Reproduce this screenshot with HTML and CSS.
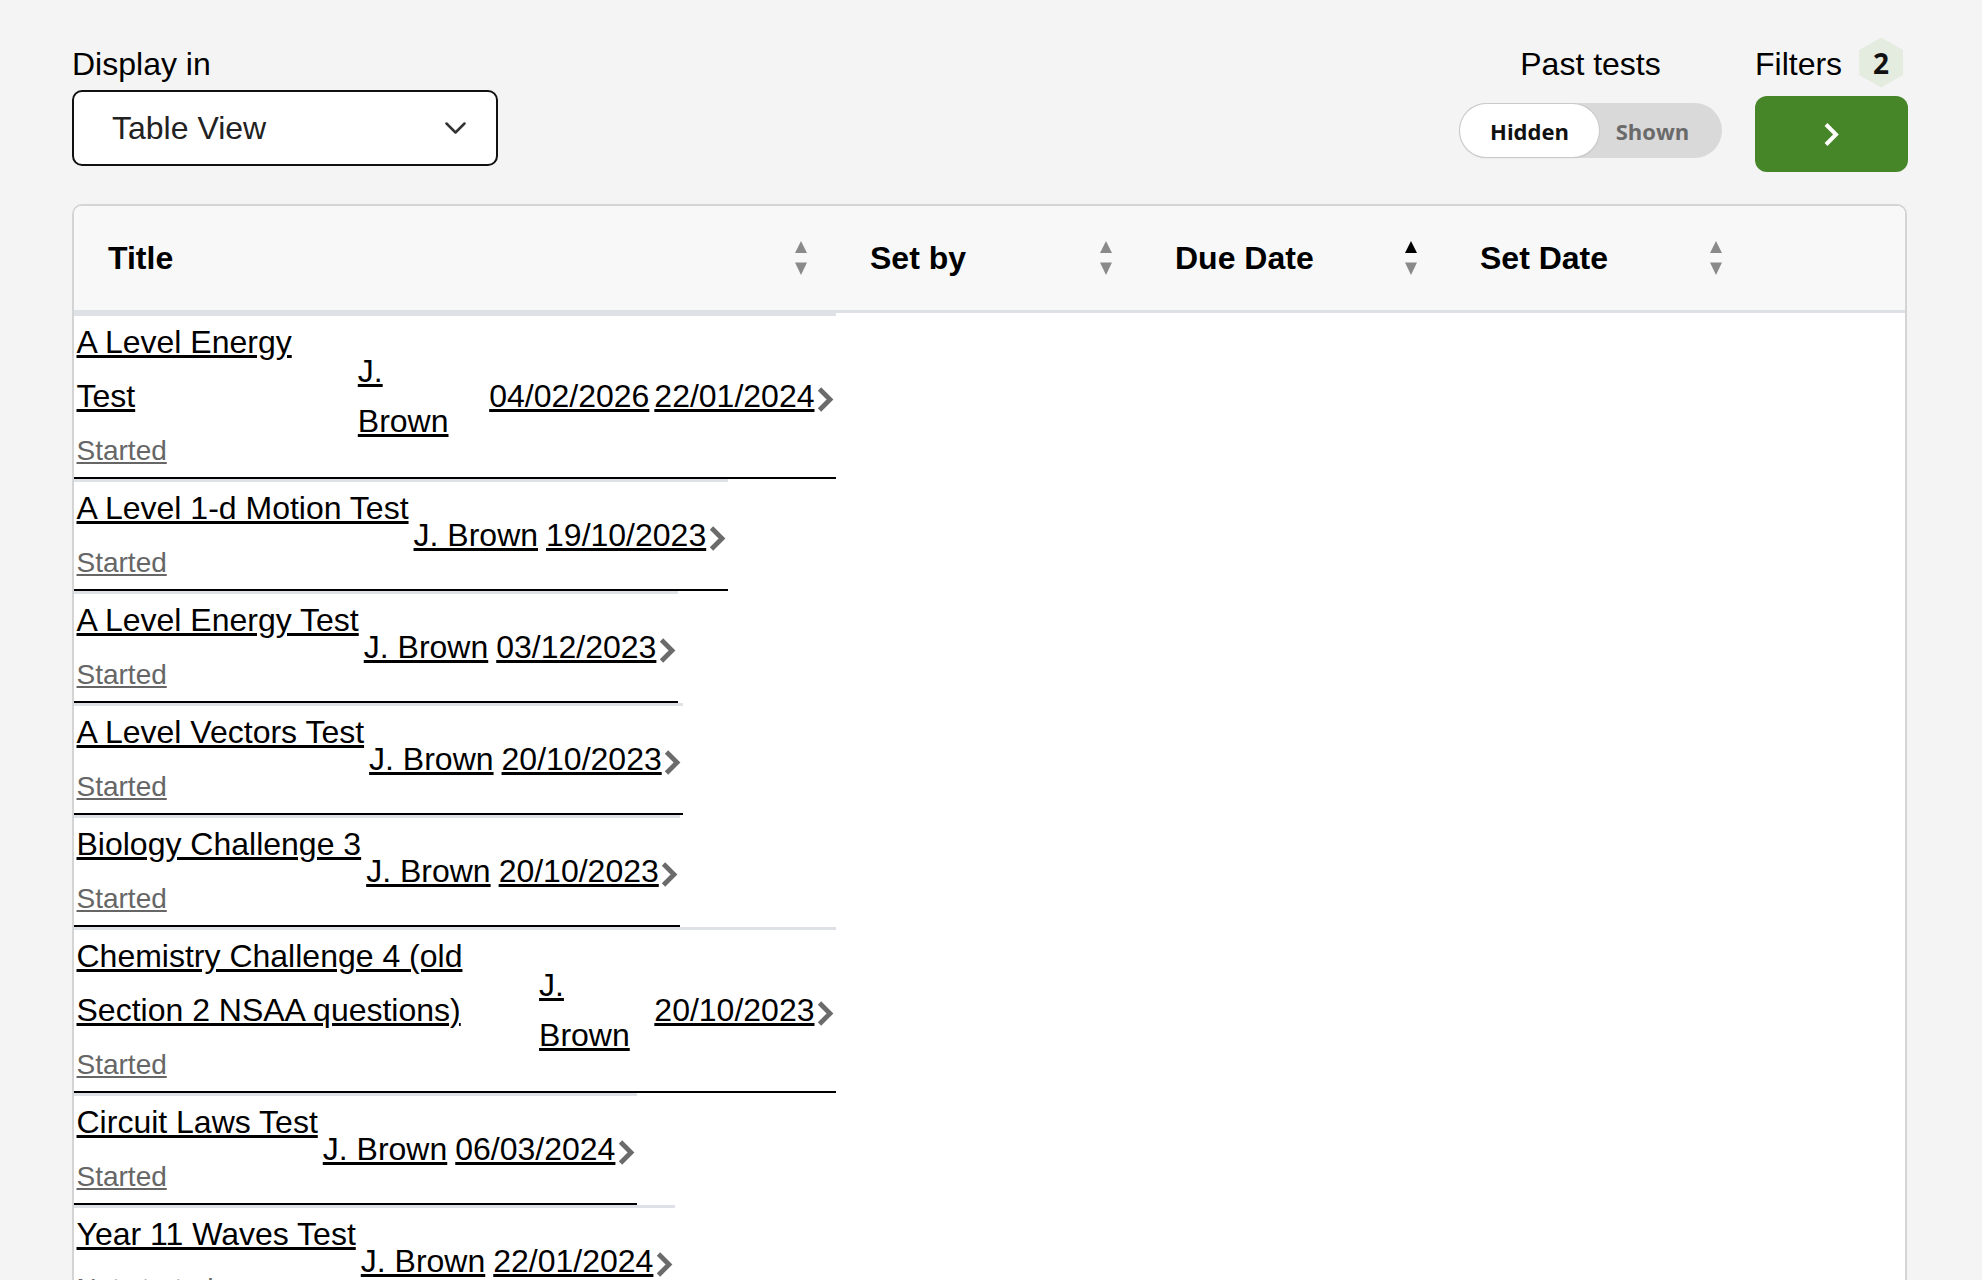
FILE: index.html
```html
<!DOCTYPE html>
<html lang="en">
<head>
<meta charset="utf-8">
<title>Tests</title>
<link rel="stylesheet" href="styles.css">
</head>
<body>
<div class="page">
  <div class="toolbar">
    <div class="display-group">
      <span class="label">Display in</span>
      <div class="select">
        <span>Table View</span>
        <svg class="select-chev" viewBox="0 0 21 12" width="21" height="12"><polyline points="1.5,1.5 10.5,10.5 19.5,1.5" fill="none" stroke="#333" stroke-width="2.5" stroke-linecap="round" stroke-linejoin="round"/></svg>
      </div>
    </div>
    <div class="right-groups">
      <div class="past-group">
        <span class="label">Past tests</span>
        <div class="toggle">
          <span class="opt on">Hidden</span>
          <span class="opt off">Shown</span>
        </div>
      </div>
      <div class="filters-group">
        <div class="filters-head">
          <span class="label">Filters</span>
          <span class="hex">2</span>
        </div>
        <button class="go" type="button">
          <svg viewBox="0 0 17 25" width="17" height="25"><polyline points="3,2.5 13,12.5 3,22.5" fill="none" stroke="#fff" stroke-width="4"/></svg>
        </button>
      </div>
    </div>
  </div>

  <div class="card">
    <div class="thead">
      <div class="th th-title"><span>Title</span><svg class="sort" viewBox="0 0 12 34"><polygon points="6,0 12,12 0,12" fill="#8a8a8a"/><polygon points="0,21.5 12,21.5 6,34" fill="#8a8a8a"/></svg></div>
      <div class="th"><span>Set by</span><svg class="sort" viewBox="0 0 12 34"><polygon points="6,0 12,12 0,12" fill="#8a8a8a"/><polygon points="0,21.5 12,21.5 6,34" fill="#8a8a8a"/></svg></div>
      <div class="th"><span>Due Date</span><svg class="sort" viewBox="0 0 12 34"><polygon points="6,0 12,12 0,12" fill="#000"/><polygon points="0,21.5 12,21.5 6,34" fill="#8a8a8a"/></svg></div>
      <div class="th"><span>Set Date</span><svg class="sort" viewBox="0 0 12 34"><polygon points="6,0 12,12 0,12" fill="#8a8a8a"/><polygon points="0,21.5 12,21.5 6,34" fill="#8a8a8a"/></svg></div>
      <div class="th th-rest"></div>
    </div>

    <div class="rows">
      <div class="row">
        <div class="c title-cell"><div><a href="#">A Level Energy Test</a></div><div class="status"><a href="#">Started</a></div></div>
        <div class="c by"><a href="#">J. Brown</a></div>
        <div class="c date"><a href="#">04/02/2026</a></div>
        <div class="c date"><a href="#">22/01/2024</a></div>
        <div class="c chev"><svg viewBox="0 0 17 27"><polyline points="2.5,3 13,13.5 2.5,24" fill="none" stroke="#6b6b6b" stroke-width="4.8"/></svg></div>
      </div>
      <div class="row">
        <div class="c title-cell"><div><a href="#">A Level 1-d Motion Test</a></div><div class="status"><a href="#">Started</a></div></div>
        <div class="c by"><a href="#">J. Brown</a></div>
        <div class="c date"><a href="#">19/10/2023</a></div>
        <div class="c chev"><svg viewBox="0 0 17 27"><polyline points="2.5,3 13,13.5 2.5,24" fill="none" stroke="#6b6b6b" stroke-width="4.8"/></svg></div>
      </div>
      <div class="row">
        <div class="c title-cell"><div><a href="#">A Level Energy Test</a></div><div class="status"><a href="#">Started</a></div></div>
        <div class="c by"><a href="#">J. Brown</a></div>
        <div class="c date"><a href="#">03/12/2023</a></div>
        <div class="c chev"><svg viewBox="0 0 17 27"><polyline points="2.5,3 13,13.5 2.5,24" fill="none" stroke="#6b6b6b" stroke-width="4.8"/></svg></div>
      </div>
      <div class="row">
        <div class="c title-cell"><div><a href="#">A Level Vectors Test</a></div><div class="status"><a href="#">Started</a></div></div>
        <div class="c by"><a href="#">J. Brown</a></div>
        <div class="c date"><a href="#">20/10/2023</a></div>
        <div class="c chev"><svg viewBox="0 0 17 27"><polyline points="2.5,3 13,13.5 2.5,24" fill="none" stroke="#6b6b6b" stroke-width="4.8"/></svg></div>
      </div>
      <div class="row">
        <div class="c title-cell"><div><a href="#">Biology Challenge 3</a></div><div class="status"><a href="#">Started</a></div></div>
        <div class="c by"><a href="#">J. Brown</a></div>
        <div class="c date"><a href="#">20/10/2023</a></div>
        <div class="c chev"><svg viewBox="0 0 17 27"><polyline points="2.5,3 13,13.5 2.5,24" fill="none" stroke="#6b6b6b" stroke-width="4.8"/></svg></div>
      </div>
      <div class="row">
        <div class="c title-cell"><div><a href="#">Chemistry Challenge 4 (old Section 2 NSAA questions)</a></div><div class="status"><a href="#">Started</a></div></div>
        <div class="c by"><a href="#">J. Brown</a></div>
        <div class="c date"><a href="#">20/10/2023</a></div>
        <div class="c chev"><svg viewBox="0 0 17 27"><polyline points="2.5,3 13,13.5 2.5,24" fill="none" stroke="#6b6b6b" stroke-width="4.8"/></svg></div>
      </div>
      <div class="row">
        <div class="c title-cell"><div><a href="#">Circuit Laws Test</a></div><div class="status"><a href="#">Started</a></div></div>
        <div class="c by"><a href="#">J. Brown</a></div>
        <div class="c date"><a href="#">06/03/2024</a></div>
        <div class="c chev"><svg viewBox="0 0 17 27"><polyline points="2.5,3 13,13.5 2.5,24" fill="none" stroke="#6b6b6b" stroke-width="4.8"/></svg></div>
      </div>
      <div class="row">
        <div class="c title-cell"><div><a href="#">Year 11 Waves Test</a></div><div class="status"><a href="#">Not started</a></div></div>
        <div class="c by"><a href="#">J. Brown</a></div>
        <div class="c date"><a href="#">22/01/2024</a></div>
        <div class="c chev"><svg viewBox="0 0 17 27"><polyline points="2.5,3 13,13.5 2.5,24" fill="none" stroke="#6b6b6b" stroke-width="4.8"/></svg></div>
      </div>
    </div>
  </div>
</div>
</body>
</html>
```

FILE: styles.css
```css
* { box-sizing: border-box; }
html, body { margin: 0; }
body {
  background: #f4f4f4;
  font-family: "Liberation Sans", Arial, Helvetica, sans-serif;
  color: #000;
}
.page { padding: 39px 74px 0 72px; }

/* toolbar */
.toolbar {
  display: flex;
  justify-content: space-between;
  align-items: flex-start;
}
.label {
  display: block;
  font-size: 32px;
  line-height: 50px;
  color: #000;
}
.display-group { display: flex; flex-direction: column; }
.select {
  margin-top: 1px;
  width: 426px;
  height: 76px;
  border: 2px solid #111;
  border-radius: 10px;
  background: #fff;
  display: flex;
  align-items: center;
  justify-content: space-between;
  padding: 0 30px 0 38px;
  font-size: 32px;
  color: #222;
}
.select-chev { display: block; }

.right-groups { display: flex; gap: 33px; align-items: flex-start; }
.past-group { display: flex; flex-direction: column; align-items: center; }
.toggle {
  margin-top: 14px;
  width: 263px;
  height: 55px;
  border-radius: 28px;
  background: #d9d9d9;
  display: flex;
  padding: 1px;
  font-family: "Open Sans", "Noto Sans", sans-serif;
  font-weight: 700;
  font-size: 22px;
}
.opt { display: flex; align-items: center; justify-content: center; }
.opt.on {
  width: 139px;
  background: #fff;
  border-radius: 27px;
  color: #111;
  box-shadow: 0 0 0 1px #cacaca, 0 1px 2px rgba(0,0,0,0.12);
}
.opt.off { flex: 1; padding-right: 15px; color: #6a6a6a; }

.filters-group { display: flex; flex-direction: column; width: 153px; }
.filters-head { display: flex; align-items: center; height: 50px; gap: 17px; }
.hex {
  width: 44px;
  height: 50px;
  margin-top: -3px;
  clip-path: polygon(50% 0, 100% 25%, 100% 75%, 50% 100%, 0 75%, 0 25%);
  background: #e4ece0;
  display: flex;
  align-items: center;
  justify-content: center;
  font-family: "Open Sans", "Noto Sans", sans-serif;
  font-weight: 700;
  font-size: 28px;
  color: #111;
}
.go {
  margin-top: 7px;
  width: 153px;
  height: 76px;
  border: none;
  border-radius: 12px;
  background: #468628;
  display: flex;
  align-items: center;
  justify-content: center;
  padding: 0;
}
.go svg { display: block; }

/* card / table */
.card {
  margin-top: 32px;
  margin-right: 1px;
  border: 2px solid #d4d4d4;
  border-bottom: none;
  border-radius: 10px 10px 0 0;
  background: #fff;
  overflow: hidden;
  min-height: 1100px;
}
.thead {
  display: flex;
  height: 107px;
  background: #f8f8f8;
  border-bottom: 3px solid #dee2e6;
}
.th {
  width: 305px;
  flex: none;
  display: flex;
  align-items: center;
  justify-content: space-between;
  padding: 0 29px 0 34px;
  font-weight: 700;
  font-size: 32px;
  color: #000;
}
.th-title { width: 762px; }
.th-rest { flex: 1; }
.sort { display: block; width: 12px; height: 34px; }

.rows { width: 762px; }
.row {
  display: table;
  border-collapse: separate;
  border-spacing: 0;
  border-top: 3px solid #dee2e6;
  border-bottom: 2px solid #000;
}
.c {
  display: table-cell;
  vertical-align: middle;
  padding: 0 2.5px;
  font-size: 32px;
}
.c a { color: #000; text-decoration: underline; }
.title-cell { line-height: 53.55px; }
.status a { font-size: 28px; line-height: 1; color: #666; }
.by { line-height: 50px; padding-right: 5.5px; }
.date { line-height: 50px; white-space: nowrap; }
.chev { padding: 0 2px 0 0; }
.chev svg { display: block; width: 17px; height: 27px; margin-top: 6px; }
```
